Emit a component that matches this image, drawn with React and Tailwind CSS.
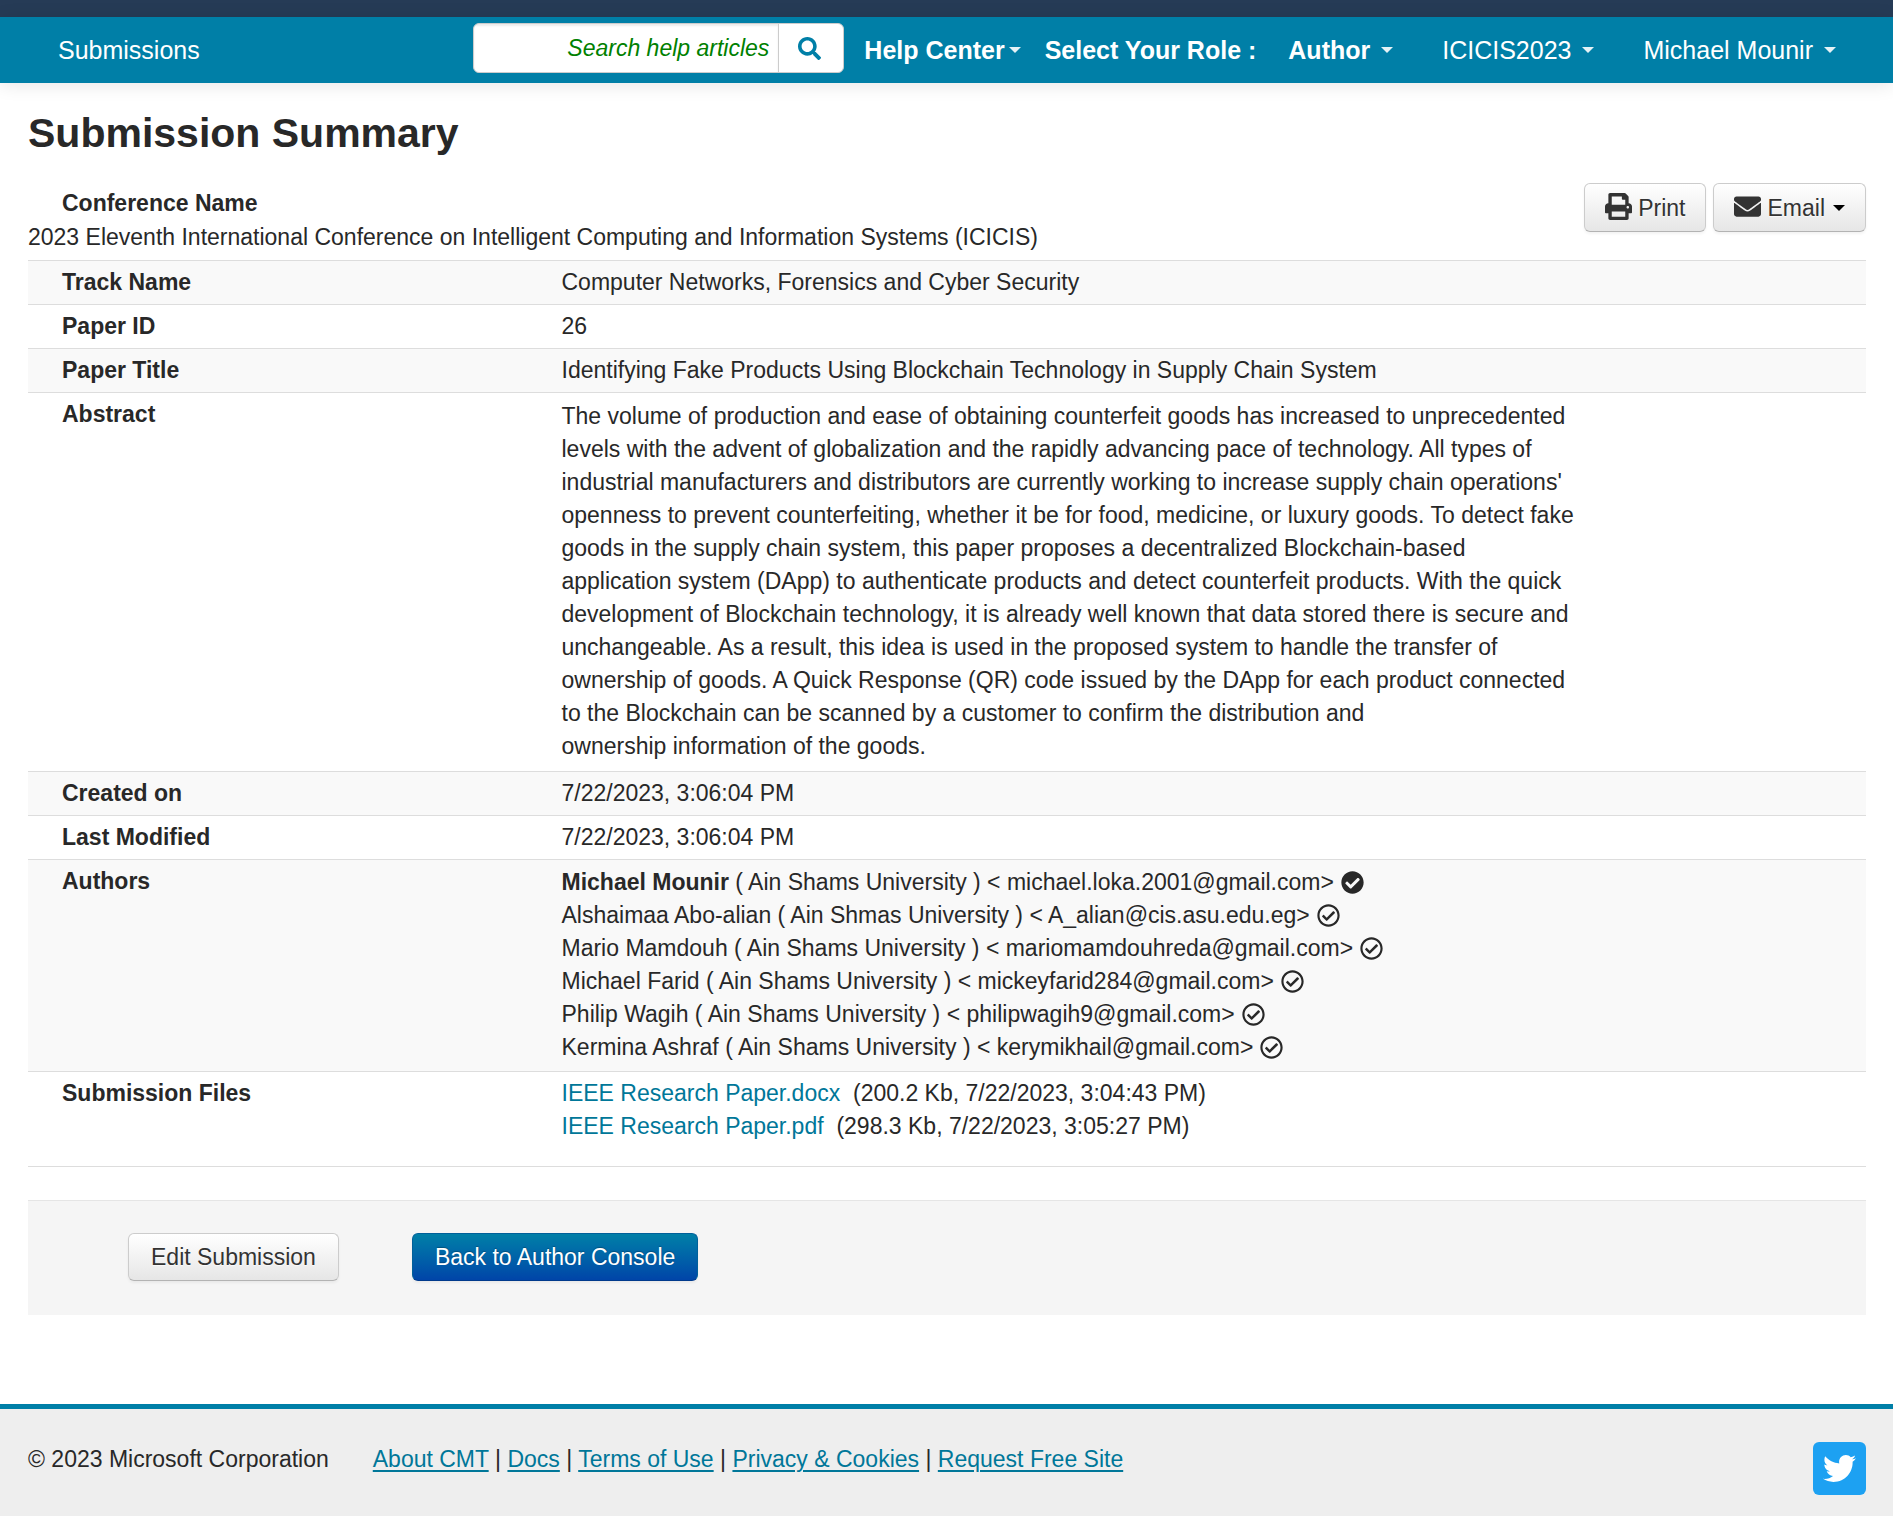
import React from "react";
import { FaCheckCircle, FaEnvelope, FaPrint, FaRegCheckCircle, FaSearch, FaTwitter } from "react-icons/fa";

const authors = [
  { name: "Michael Mounir", org: "Ain Shams University", email: "michael.loka.2001@gmail.com", primary: true },
  { name: "Alshaimaa Abo-alian", org: "Ain Shmas University", email: "A_alian@cis.asu.edu.eg" },
  { name: "Mario Mamdouh", org: "Ain Shams University", email: "mariomamdouhreda@gmail.com" },
  { name: "Michael Farid", org: "Ain Shams University", email: "mickeyfarid284@gmail.com" },
  { name: "Philip Wagih", org: "Ain Shams University", email: "philipwagih9@gmail.com" },
  { name: "Kermina Ashraf", org: "Ain Shams University", email: "kerymikhail@gmail.com" },
];

const files = [
  { name: "IEEE Research Paper.docx", info: "(200.2 Kb, 7/22/2023, 3:04:43 PM)" },
  { name: "IEEE Research Paper.pdf", info: "(298.3 Kb, 7/22/2023, 3:05:27 PM)" },
];

const footerLinks = ["About CMT", "Docs", "Terms of Use", "Privacy & Cookies", "Request Free Site"];

function Caret({ className = "" }) {
  return (
    <svg viewBox="0 0 12 6" className={`h-[6px] w-[12px] shrink-0 ${className}`} aria-hidden="true">
      <path d="M0 0h12L6 6z" fill="currentColor" />
    </svg>
  );
}

function NavMenu({ label, bold, tight }) {
  return (
    <button
      type="button"
      className={`flex items-center whitespace-nowrap ${tight ? "gap-1" : "gap-[11px]"} ${bold ? "font-bold" : ""}`}
    >
      {label}
      <Caret className="text-[#e5f2f6]" />
    </button>
  );
}

function Row({ label, shaded, children }) {
  return (
    <tr className={`border-t border-[#dddddd] align-top ${shaded ? "bg-[#f9f9f9]" : ""}`}>
      <th scope="row" className="w-1/4 py-[5px] pl-[34px] text-left font-bold">
        {label}
      </th>
      <td className="py-[5px] pl-[74px]">{children}</td>
    </tr>
  );
}

const lightButton =
  "flex items-center rounded-md border border-[#cccccc] border-b-[#b3b3b3] bg-linear-to-b from-white to-[#e6e6e6] text-[#333333] shadow-[0_2px_3px_rgba(0,0,0,0.05)] [text-shadow:0_1px_1px_rgba(255,255,255,0.75)]";

export default function App() {
  return (
    <div className="flex min-h-screen flex-col bg-white font-['Liberation_Sans',Arial,sans-serif] text-[23px] leading-[33px] text-[#282828]">
      <header>
        <div className="h-[17px] bg-[#263b56]" />
        <nav className="flex h-[66px] items-center bg-[#007fa7] pr-[57px] pl-[58px] text-[25px] text-white shadow-[0_2px_17px_rgba(0,0,0,0.1)]">
          <a href="#submissions">Submissions</a>
          <form className="mb-1 ml-auto flex h-[50px] w-[371px] overflow-hidden rounded-md border border-[#cccccc] bg-white">
            <input
              type="text"
              aria-label="Search help articles"
              placeholder="Search help articles"
              className="min-w-0 flex-1 border-r border-[#cccccc] pr-[9px] text-right text-[23px] italic shadow-[inset_0_2px_2px_rgba(0,0,0,0.075)] outline-none placeholder:text-[#008000] placeholder:opacity-100"
            />
            <button type="button" aria-label="Search" className="flex w-16 items-center justify-center text-[#007fa7]">
              <FaSearch className="mr-1 size-[23px]" />
            </button>
          </form>
          <div className="ml-5">
            <NavMenu label="Help Center" bold tight />
          </div>
          <span className="ml-6 font-bold whitespace-nowrap">Select Your Role :</span>
          <div className="ml-8 flex items-center gap-[49px]">
            <NavMenu label="Author" bold />
            <NavMenu label="ICICIS2023" />
            <NavMenu label="Michael Mounir" />
          </div>
        </nav>
      </header>

      <main className="mr-[27px] ml-7 grow">
        <h1 className="pt-[26px] text-[41px] leading-[48px] font-bold">Submission Summary</h1>
        <div className="mt-[26px] flex items-start justify-between pb-[6px]">
          <dl>
            <dt className="pt-1 pb-px pl-[34px] font-bold">Conference Name</dt>
            <dd>2023 Eleventh International Conference on Intelligent Computing and Information Systems (ICICIS)</dd>
          </dl>
          <div className="flex gap-[7px]">
            <button type="button" className={`${lightButton} h-[49px] gap-[6px] px-5 pt-px`}>
              <FaPrint className="mb-1 size-[27px]" />
              Print
            </button>
            <button type="button" className={`${lightButton} h-[49px] gap-[6px] px-5 pt-px`}>
              <FaEnvelope className="mb-1 size-[27px]" />
              Email
              <Caret className="ml-[2px] text-black" />
            </button>
          </div>
        </div>

        <table className="w-full border-collapse border-b border-[#dddddd]">
          <tbody>
            <Row label="Track Name" shaded>
              Computer Networks, Forensics and Cyber Security
            </Row>
            <Row label="Paper ID">26</Row>
            <Row label="Paper Title" shaded>
              Identifying Fake Products Using Blockchain Technology in Supply Chain System
            </Row>
            <Row label="Abstract">
              <p className="max-w-[1020px] pt-[2px] pb-[3px]">
                The volume of production and ease of obtaining counterfeit goods has increased to unprecedented levels
                with the advent of globalization and the rapidly advancing pace of technology. All types of industrial
                manufacturers and distributors are currently working to increase supply chain operations' openness to
                prevent counterfeiting, whether it be for food, medicine, or luxury goods. To detect fake goods in the
                supply chain system, this paper proposes a decentralized Blockchain-based application system (DApp) to
                authenticate products and detect counterfeit products. With the quick development of Blockchain
                technology, it is already well known that data stored there is secure and unchangeable. As a result,
                this idea is used in the proposed system to handle the transfer of ownership of goods. A Quick Response
                (QR) code issued by the DApp for each product connected to the Blockchain can be scanned by a customer
                to confirm the distribution and
                <br />
                ownership information of the goods.
              </p>
            </Row>
            <Row label="Created on" shaded>
              7/22/2023, 3:06:04 PM
            </Row>
            <Row label="Last Modified">7/22/2023, 3:06:04 PM</Row>
            <Row label="Authors" shaded>
              <ul className="pt-px pb-[2px]">
                {authors.map((a) => (
                  <li key={a.email} className="flex items-center gap-[7px]">
                    <span>
                      <span className={a.primary ? "font-bold" : ""}>{a.name}</span> ( {a.org} ) &lt; {a.email}&gt;
                    </span>
                    {a.primary ? <FaCheckCircle className="size-[23px]" /> : <FaRegCheckCircle className="size-[23px]" />}
                  </li>
                ))}
              </ul>
            </Row>
            <Row label="Submission Files">
              <ul className="pb-[18px]">
                {files.map((f) => (
                  <li key={f.name}>
                    <a href="#file" className="text-[#007799]">
                      {f.name}
                    </a>
                    &nbsp; {f.info}
                  </li>
                ))}
              </ul>
            </Row>
          </tbody>
        </table>

        <div className="mt-[33px] mb-20 flex gap-[73px] border-t border-[#e5e5e5] bg-[#f5f5f5] pt-8 pb-[34px] pl-[100px]">
          <button type="button" className={`${lightButton} h-12 px-[22px]`}>
            Edit Submission
          </button>
          <button
            type="button"
            className="flex h-12 items-center rounded-md border border-[#00609a] border-b-[#003a8c] bg-linear-to-b from-[#007fa7] to-[#0044a8] px-[22px] text-white shadow-[0_2px_3px_rgba(0,0,0,0.05)] [text-shadow:0_-1px_1px_rgba(0,0,0,0.25)]"
          >
            Back to Author Console
          </button>
        </div>
      </main>

      <footer className="flex items-start justify-between border-t-[5px] border-[#007fa7] bg-[#eeeeee] pt-[33px] pr-[27px] pb-[21px] pl-7">
        <div className="flex gap-11 pt-px">
          <span>© 2023 Microsoft Corporation</span>
          <div>
            {footerLinks.map((l, i) => (
              <React.Fragment key={l}>
                {i > 0 && " | "}
                <a href="#info" className="text-[#007799] underline decoration-2 underline-offset-[3px]">
                  {l}
                </a>
              </React.Fragment>
            ))}
          </div>
        </div>
        <a
          href="#twitter"
          aria-label="Twitter"
          className="flex size-[53px] items-center justify-center rounded-md bg-[#1da1f2] text-white"
        >
          <FaTwitter className="size-[33px]" />
        </a>
      </footer>
    </div>
  );
}
